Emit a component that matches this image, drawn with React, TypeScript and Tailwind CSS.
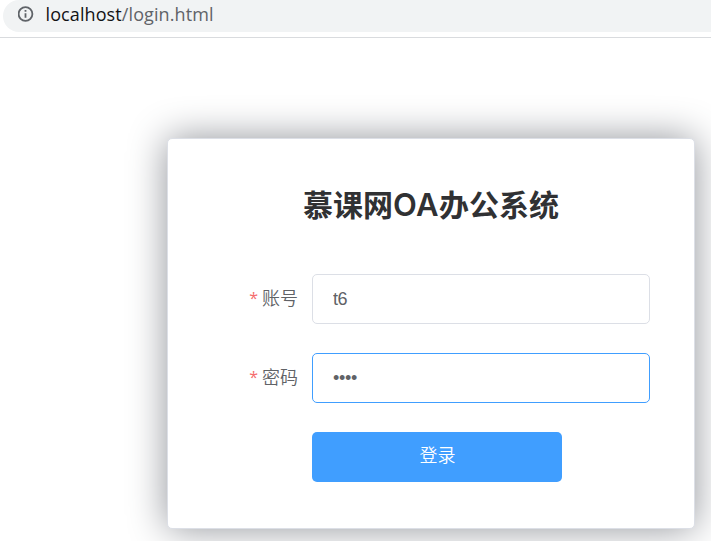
export default function App() {
  return (
    <div className="flex h-[541px] w-[711px] flex-col overflow-hidden bg-white font-['Liberation_Sans','Noto_Sans_CJK_SC',sans-serif]">
      <header className="h-[38px] shrink-0 border-b border-[#d9dbde] pl-[3px]">
        <div className="flex h-8 items-center rounded-l-full bg-[#f1f3f4] pb-1 pl-[15px]">
          <svg width="16" height="16" viewBox="0 0 16 16" fill="none" stroke="#5f6368" strokeWidth="1.8">
            <circle cx="7.5" cy="8" r="6.9" />
            <path d="M7.5 7.2v4.6M7.5 4v1.8" />
          </svg>
          <div className="ml-[11.5px] font-['Open_Sans',sans-serif] text-[18px] leading-6 tracking-[0.1px] text-[#5f6368]">
            <span className="text-[#111214]">localhost</span>/login.html
          </div>
        </div>
      </header>
      <main className="pl-[167px] pt-[100px]">
        <form className="h-[391px] w-[528px] rounded-[5px] border border-[#dcdfe6] bg-white text-[18px] text-[#606266] shadow-[0_0_38px_#909399]">
          <h2 className="h-[88px] pt-[45px] text-center text-[30px] leading-[44px] font-bold text-[#303133]">慕课网<span className="font-['Inter',sans-serif] text-[31px] leading-none font-semibold tracking-[0.5px]">OA</span>办公系统</h2>
          <div className="mt-[47px] flex h-[50px] items-center">
            <label className="w-[144px] pr-[14px] text-right font-[350]"><span className="mr-1 align-[1px] font-['Open_Sans',sans-serif] text-[16px] leading-none font-normal text-[#f56c6c]">*</span>账号</label>
            <input className="h-[50px] w-[338px] rounded-[5px] border border-[#dcdfe6] pl-[20px] tracking-[-0.6px] outline-none" defaultValue="t6" />
          </div>
          <div className="mt-[29px] flex h-[50px] items-center">
            <label className="w-[144px] pr-[14px] text-right font-[350]"><span className="mr-1 align-[1px] font-['Open_Sans',sans-serif] text-[16px] leading-none font-normal text-[#f56c6c]">*</span>密码</label>
            <input className="h-[50px] w-[338px] rounded-[5px] border border-[#409eff] pl-[20px] tracking-[-0.3px] outline-none" defaultValue="••••" />
          </div>
          <button type="button" className="mt-[29px] ml-[144px] h-[50px] w-[250px] rounded-[5px] bg-[#409eff] pb-0.5 pl-px font-[350] text-white">登录</button>
        </form>
      </main>
    </div>
  );
}
